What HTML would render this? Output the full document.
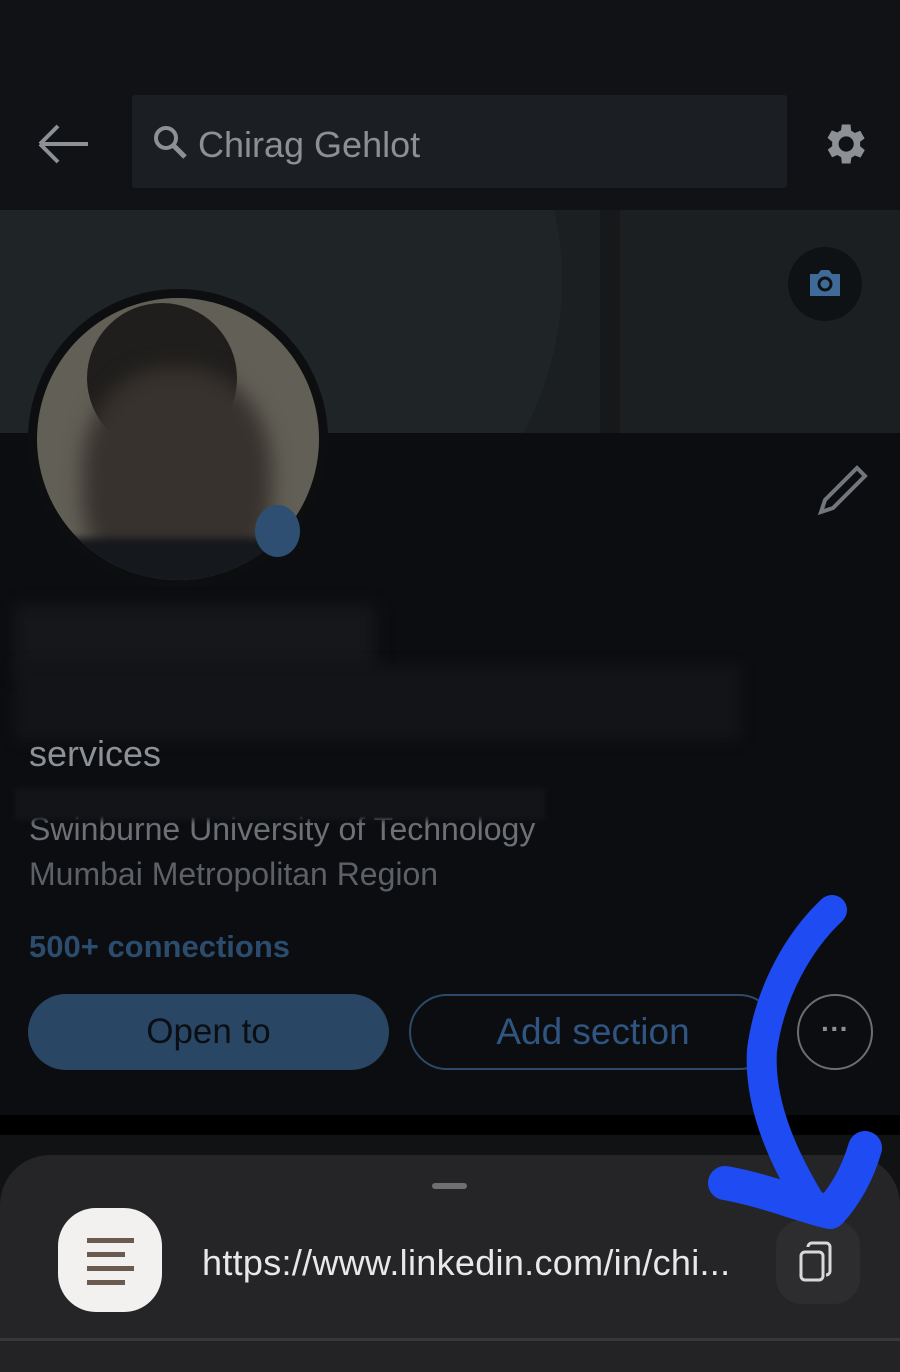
<!DOCTYPE html>
<html><head><meta charset="utf-8"><style>
*{margin:0;padding:0;box-sizing:border-box}
body{width:900px;height:1372px;background:#0b0d10;position:relative;overflow:hidden;font-family:"Liberation Sans",sans-serif}
.a{position:absolute}
</style></head><body>
<div class="a" style="left:0;top:0;width:900px;height:210px;background:#101215"></div>
<svg class="a" style="left:36px;top:120px" width="56" height="48" viewBox="0 0 56 48"><path d="M4 24H52M4 24L22 6M4 24L22 42" stroke="#8d9095" stroke-width="4" fill="none"/></svg>
<div class="a" style="left:132px;top:95px;width:655px;height:93px;background:#1b1e22;border-radius:3px"></div>
<svg class="a" style="left:152px;top:124px" width="36" height="36" viewBox="0 0 36 36"><circle cx="14" cy="14" r="10" stroke="#8d9095" stroke-width="4" fill="none"/><path d="M21 21L33 33" stroke="#8d9095" stroke-width="5"/></svg>
<div class="a" style="left:198px;top:124px;font-size:36px;color:#8c8f94">Chirag Gehlot</div>
<svg class="a" style="left:818px;top:118px" width="52" height="52" viewBox="0 0 24 24"><path fill="#8d9095" d="M19.4 13a7.5 7.5 0 000-2l2.1-1.6-2-3.5-2.5 1a7 7 0 00-1.7-1L15 3h-4l-.4 2.7a7 7 0 00-1.7 1l-2.5-1-2 3.5L6.6 11a7.5 7.5 0 000 2l-2.1 1.6 2 3.5 2.5-1a7 7 0 001.7 1L11 21h4l.4-2.7a7 7 0 001.7-1l2.5 1 2-3.5zM13 15.5a3.5 3.5 0 110-7 3.5 3.5 0 010 7z"/></svg>
<div class="a" style="left:0;top:210px;width:900px;height:223px;background:#1c1f21;overflow:hidden">
<div class="a" style="left:-300px;top:-300px;width:862px;height:740px;border-radius:50%;background:#1f2527"></div>
<div class="a" style="left:600px;top:0;width:20px;height:223px;background:#161819"></div>
</div>
<div class="a" style="left:788px;top:247px;width:74px;height:74px;border-radius:50%;background:#0f1215"></div>
<svg class="a" style="left:808px;top:268px" width="34" height="30" viewBox="0 0 34 30"><path fill="#3f6b99" d="M2 6h8l3-4h8l3 4h8v22H2z"/><circle cx="17" cy="16" r="6" fill="none" stroke="#0f1215" stroke-width="3"/></svg>
<div class="a" style="left:28px;top:289px;width:300px;height:300px;border-radius:50%;background:#0c0e10"></div>
<div class="a" style="left:37px;top:298px;width:282px;height:282px;border-radius:50%;background:#626056;overflow:hidden">
<div class="a" style="left:50px;top:5px;width:150px;height:150px;border-radius:50%;background:#1f1e1c"></div>
<div class="a" style="left:45px;top:70px;width:190px;height:230px;border-radius:45%;background:#38322e;filter:blur(10px)"></div>
<div class="a" style="left:0;top:240px;width:282px;height:50px;background:#15181c;filter:blur(4px)"></div>
</div>
<div class="a" style="left:255px;top:505px;width:45px;height:52px;border-radius:50%;background:#2e4f72"></div>
<svg class="a" style="left:815px;top:462px" width="56" height="56" viewBox="0 0 56 56"><path d="M6 50L10 38L42 6L50 14L18 46Z" stroke="#73767b" stroke-width="4" fill="none"/></svg>
<div class="a" style="left:15px;top:605px;width:360px;height:70px;background:#15171a;filter:blur(8px)"></div>
<div class="a" style="left:15px;top:665px;width:725px;height:75px;background:#121417;filter:blur(6px)"></div>
<div class="a" style="left:29px;top:733px;font-size:36px;color:#8d9094">services</div>
<div class="a" style="left:29px;top:811px;font-size:32px;color:#6d7075">Swinburne University of Technology</div>
<div class="a" style="left:15px;top:788px;width:530px;height:32px;background:#121417;filter:blur(3px)"></div>
<div class="a" style="left:29px;top:856px;font-size:32px;color:#5d6065">Mumbai Metropolitan Region</div>
<div class="a" style="left:29px;top:929px;font-size:31px;font-weight:bold;color:#2c4c6d">500+ connections</div>
<div class="a" style="left:28px;top:994px;width:361px;height:76px;border-radius:38px;background:#2a4665;color:#0b0f14;font-size:35px;text-align:center;line-height:76px">Open to</div>
<div class="a" style="left:409px;top:994px;width:368px;height:76px;border-radius:38px;border:2px solid #2d4a68;color:#2f5580;font-size:37px;text-align:center;line-height:72px">Add section</div>
<div class="a" style="left:797px;top:994px;width:76px;height:76px;border-radius:50%;border:2px solid #6b6e72;color:#8d9095;font-size:28px;text-align:center;line-height:66px;font-weight:bold">···</div>
<div class="a" style="left:0;top:1115px;width:900px;height:20px;background:#000"></div>
<div class="a" style="left:0;top:1135px;width:900px;height:237px;background:#101214"></div>
<div class="a" style="left:0;top:1155px;width:900px;height:185px;background:#252527;border-radius:50px 50px 0 0"></div>
<div class="a" style="left:0;top:1338px;width:900px;height:3px;background:#38383a"></div>
<div class="a" style="left:0;top:1341px;width:900px;height:31px;background:#232325"></div>
<div class="a" style="left:432px;top:1183px;width:35px;height:6px;border-radius:3px;background:#6f6f72"></div>
<div class="a" style="left:58px;top:1208px;width:104px;height:104px;border-radius:38px;background:#f3f1ef"></div>
<div class="a" style="left:87px;top:1238px;width:47px;height:5px;background:#6b5a50"></div>
<div class="a" style="left:87px;top:1252px;width:38px;height:5px;background:#6b5a50"></div>
<div class="a" style="left:87px;top:1266px;width:47px;height:5px;background:#6b5a50"></div>
<div class="a" style="left:87px;top:1280px;width:38px;height:5px;background:#6b5a50"></div>
<div class="a" style="left:202px;top:1242px;font-size:36px;color:#e8e8e8;letter-spacing:0.3px">https://www.linkedin.com/in/chi...</div>
<div class="a" style="left:776px;top:1220px;width:84px;height:84px;border-radius:26px;background:#2d2d2f"></div>
<svg class="a" style="left:796px;top:1240px" width="44" height="44" viewBox="0 0 44 44"><rect x="5" y="12" width="22" height="28" rx="4" stroke="#d8d8d8" stroke-width="3" fill="none"/><path d="M12 7a4 4 0 014-4h14a4 4 0 014 4v24a4 4 0 01-4 4" stroke="#d8d8d8" stroke-width="3" fill="none"/></svg>
<svg class="a" style="left:0;top:0" width="900" height="1372"><path d="M832 910C800 940 770 990 762 1050C758 1110 790 1170 815 1210" stroke="#1f4cf2" stroke-width="30" fill="none" stroke-linecap="round"/><path d="M725 1183C765 1190 800 1205 830 1212C850 1190 860 1165 865 1148" stroke="#1f4cf2" stroke-width="34" fill="none" stroke-linecap="round" stroke-linejoin="round"/></svg>
</body></html>
